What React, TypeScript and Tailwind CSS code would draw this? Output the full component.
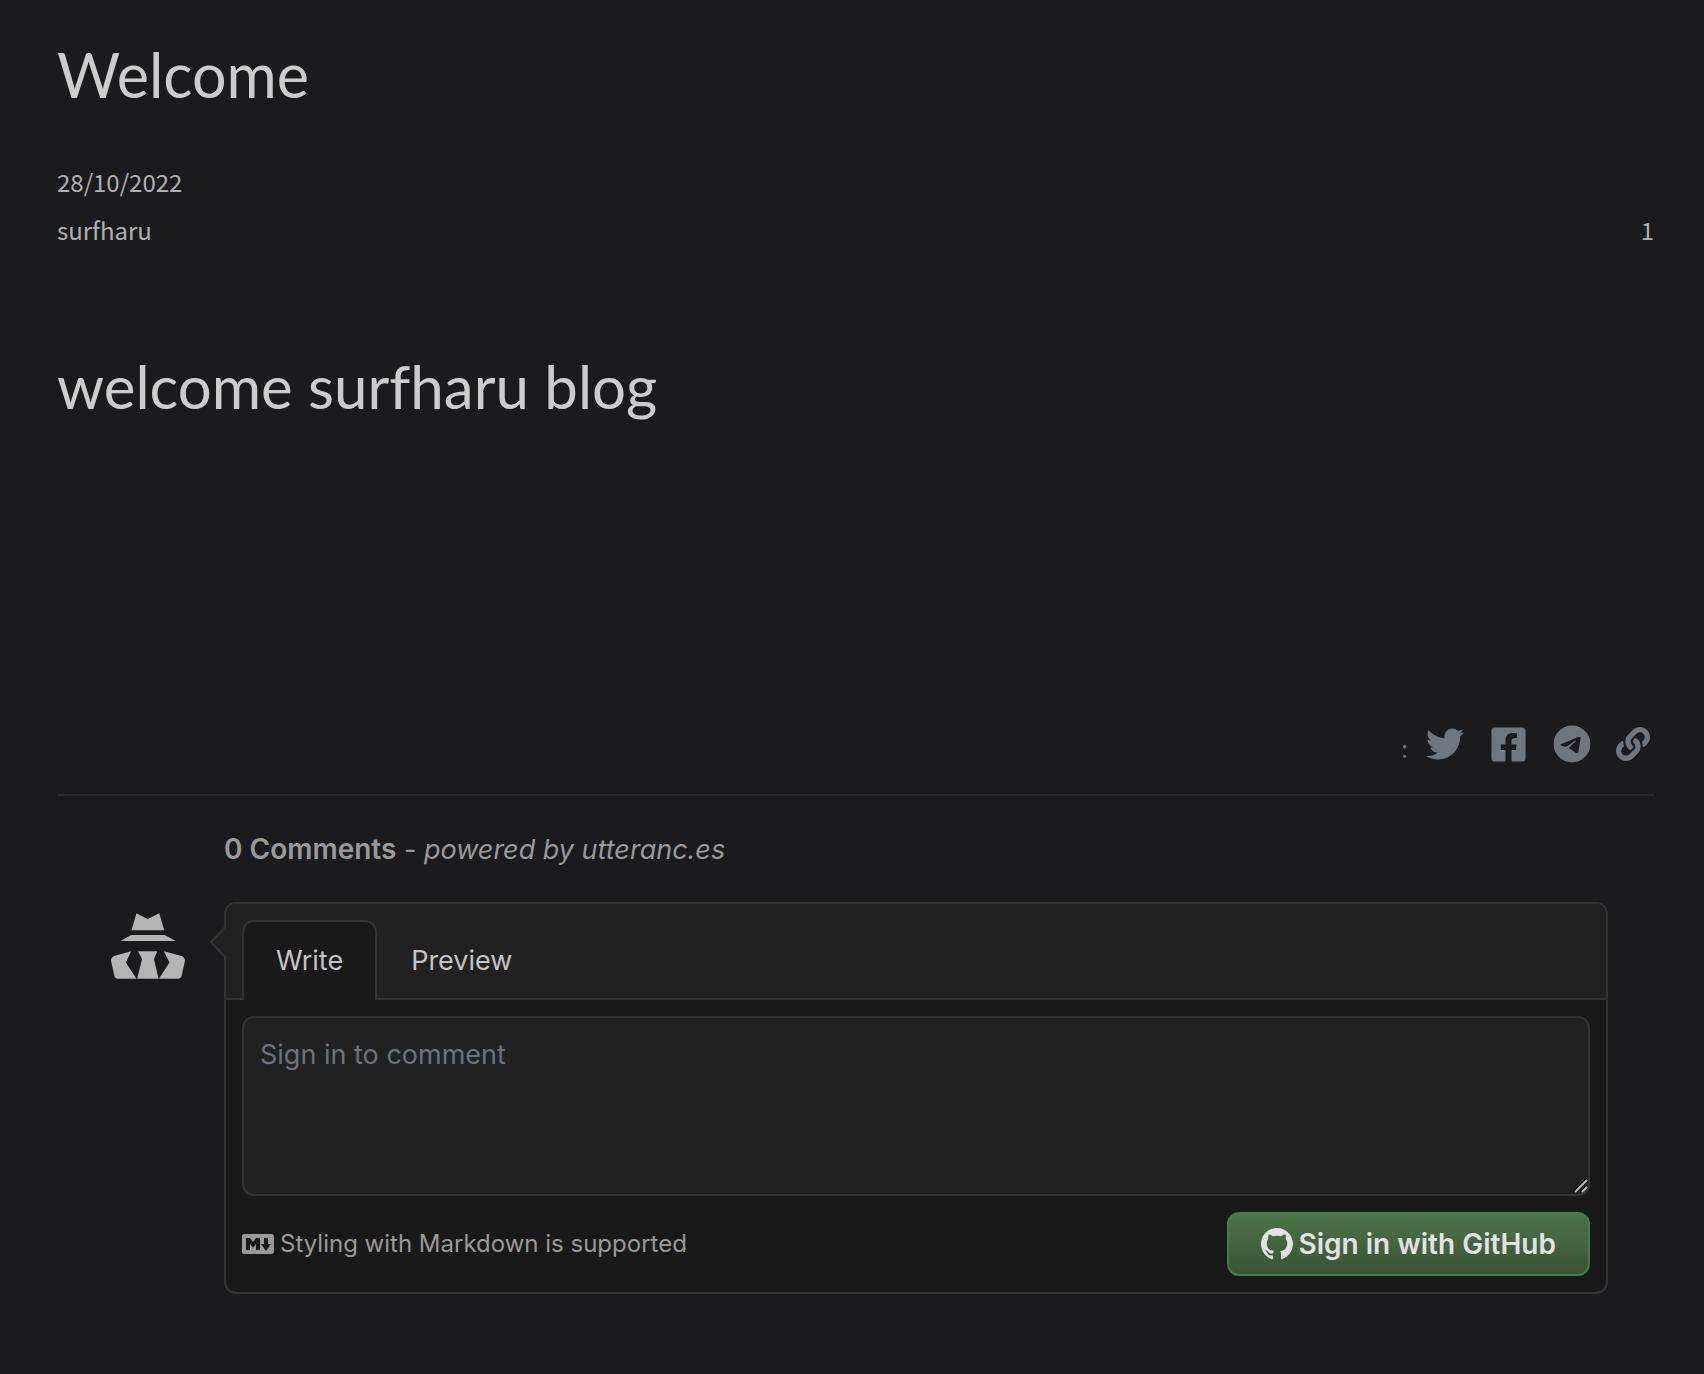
import React, { useState } from "react";
import { FaTwitter, FaFacebookSquare, FaLink } from "react-icons/fa";
import { FaTelegram } from "react-icons/fa6";

const ui = "font-['Inter',sans-serif]";
const heading = "font-['Lato',sans-serif] leading-[72px] text-[#ccc] [font-variant-ligatures:none]";

function Avatar() {
  return (
    <svg viewBox="0 0 224 198" className="h-[66px] w-[74px]" fill="#b4b4b4" aria-hidden="true">
      <path d="M77 0 111 17 146 0 161 51H62z" />
      <path d="M61 66H162L196 84H29z" />
      <path d="M61 115 45 149 77 198H21Q12 198 10 188L0 144Q-1 134 9 129Z" />
      <path d="M82 115H140L130 139 144 198H79L94 139Z" />
      <path d="M160 115 214 129Q224 134 224 144L214 188Q212 198 202 198H145L177 149Z" />
    </svg>
  );
}

function GitHubMark() {
  return (
    <svg viewBox="0 0 16 16" className="size-8" fill="#dfe4df" aria-hidden="true">
      <path d="M8 0C3.58 0 0 3.58 0 8c0 3.54 2.29 6.53 5.47 7.59.4.07.55-.17.55-.38 0-.19-.01-.82-.01-1.49-2.01.37-2.53-.49-2.69-.94-.09-.23-.48-.94-.82-1.13-.28-.15-.68-.52-.01-.53.63-.01 1.08.58 1.23.82.72 1.21 1.87.87 2.33.66.07-.52.28-.87.51-1.07-1.78-.2-3.64-.89-3.64-3.95 0-.87.31-1.59.82-2.15-.08-.2-.36-1.02.08-2.12 0 0 .67-.21 2.2.82.64-.18 1.32-.27 2-.27.68 0 1.36.09 2 .27 1.53-1.04 2.2-.82 2.2-.82.44 1.1.16 1.92.08 2.12.51.56.82 1.27.82 2.15 0 3.07-1.87 3.75-3.65 3.95.29.25.54.73.54 1.48 0 1.07-.01 1.93-.01 2.2 0 .21.15.46.55.38A8.013 8.013 0 0016 8c0-4.42-3.58-8-8-8z" />
    </svg>
  );
}

function MarkdownMark() {
  return (
    <svg viewBox="0 3 16 10" className="h-5 w-8" fill="currentColor" aria-hidden="true">
      <path
        fillRule="evenodd"
        d="M14.85 3H1.15C.52 3 0 3.52 0 4.15v7.69C0 12.48.52 13 1.15 13h13.69c.64 0 1.15-.52 1.15-1.15v-7.7C16 3.52 15.48 3 14.85 3zM9 11H7V8L5.5 9.92 4 8v3H2V5h2l1.5 2L7 5h2v6zm2.99.5L9.5 8H11V5h2v3h1.5l-2.51 3.5z"
      />
    </svg>
  );
}

function Share() {
  return (
    <div className="flex items-center justify-end text-[#6f767e]">
      <span className="mr-[18px] pt-2 text-2xl leading-9">:</span>
      <a href="#twitter" aria-label="Twitter" className="mr-[25px]">
        <FaTwitter size={38} />
      </a>
      <a href="#facebook" aria-label="Facebook" className="mr-[25px]">
        <FaFacebookSquare size={39} />
      </a>
      <a href="#telegram" aria-label="Telegram" className="mr-[25px]">
        <FaTelegram size={38} />
      </a>
      <button type="button" aria-label="Copy link" className="mr-1">
        <FaLink size={34} />
      </button>
    </div>
  );
}

function ResizeGrip() {
  return (
    <svg viewBox="0 0 16 16" className="pointer-events-none absolute right-0.5 bottom-0.5 size-4" fill="none" aria-hidden="true">
      <path d="M1 14 14 1M8 14 15 7" stroke="#000" strokeWidth="1.5" />
      <path d="M3 14 15 2M10 14 15 9" stroke="#b8b8b8" strokeWidth="2" />
    </svg>
  );
}

function Comments() {
  const [tab, setTab] = useState("write");
  const tabClass = (name: string) =>
    tab === name
      ? "-mb-0.5 h-20 rounded-t-xl border-2 border-b-0 border-[#343434] bg-[#191919] px-8"
      : "h-[78px] px-[34px] pt-1";
  return (
    <section className={`${ui} pt-8 pr-[46px] pl-[54px]`}>
      <h2 className="ml-[113px] text-[27px] leading-[42px] text-[#999]">
        <a href="#comments" className="text-[28px] font-semibold">0 Comments</a>
        <span> - </span>
        <a href="#utterances" className="italic">powered by utteranc.es</a>
      </h2>
      <div className="mt-[31px] flex items-start">
        <a href="#login" aria-label="Sign in" className="mt-[11px] w-[113px] shrink-0">
          <Avatar />
        </a>
        <form className="relative min-w-0 flex-1 rounded-xl border-2 border-[#343434] bg-[#191919]" onSubmit={(e) => e.preventDefault()}>
          <svg viewBox="0 0 16 32" className="absolute top-[22px] -left-4 h-8 w-4" aria-hidden="true">
            <path d="M16 0 1 16 16 32z" fill="#212121" />
            <path d="M16 0 1 16 16 32" fill="none" stroke="#343434" strokeWidth="2" />
          </svg>
          <header className="flex rounded-t-[10px] border-b-2 border-[#343434] bg-[#212121] px-4 pt-4 text-[27px] leading-[42px] text-[#c4c4c4]">
            <button type="button" onClick={() => setTab("write")} className={tabClass("write")}>
              Write
            </button>
            <button type="button" onClick={() => setTab("preview")} className={tabClass("preview")}>
              Preview
            </button>
          </header>
          <div className="p-4">
            <div className="relative">
              <textarea
                aria-label="Comment"
                placeholder="Sign in to comment"
                className="block h-[180px] w-full resize-y rounded-xl border-2 border-[#343434] bg-[#212121] p-4 text-[27px] leading-[42px] text-[#c4c4c4] outline-none placeholder:text-[#6a737d] [&::-webkit-resizer]:bg-transparent"
              />
              <ResizeGrip />
            </div>
            <footer className="mt-4 flex items-center justify-between">
              <a href="#markdown" className="flex items-center gap-1.5 text-2xl text-[#999]">
                <MarkdownMark />
                Styling with Markdown is supported
              </a>
              <button
                type="submit"
                className="flex h-16 items-center gap-1.5 rounded-xl border-2 border-[#3a853d] bg-linear-to-b from-[#4d744a] to-[#3a5334] px-8 text-[28px] font-semibold text-[#e2e2e2]"
              >
                <GitHubMark />
                Sign in with GitHub
              </button>
            </footer>
          </div>
        </form>
      </div>
    </section>
  );
}

export default function App() {
  return (
    <main className="min-h-screen bg-[#1b1b1e] pt-[39px] pr-[50px] pb-20 pl-[57px] font-['Noto_Sans_CJK_JP',sans-serif] text-[#afb0b1]">
      <h1 className={`text-[61px] ${heading}`}>Welcome</h1>
      <div className="mt-[47px] text-2xl leading-[48px]">
        <time dateTime="2022-10-28" className="block">28/10/2022</time>
        <div className="flex justify-between">
          <a href="#author">surfharu</a>
          <span>1</span>
        </div>
      </div>
      <h1 className={`mt-24 text-[60px] ${heading}`}>welcome surfharu blog</h1>
      <div className="mt-[300px] border-b-2 border-[#2c2d2d] pb-7">
        <Share />
      </div>
      <Comments />
    </main>
  );
}
